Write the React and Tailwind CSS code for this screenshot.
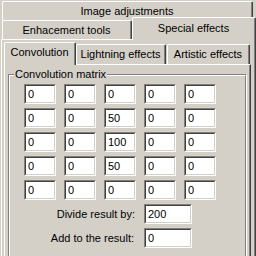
import React from 'react';

const Tab = ({ label, className = '', inner = 'items-center' }) => (
  <div
    className={`flex bg-[#d4d0c8] rounded-t-[2px] border-t border-l border-r border-white border-r-[#404040] ${className}`}
  >
    <div className={`flex-1 flex justify-center whitespace-nowrap border-r border-[#808080] ${inner}`}>
      {label}
    </div>
  </div>
);

const Field = ({ value, w = 'w-[32px]' }) => (
  <div className={`${w} h-[20px] border border-t-[#808080] border-l-[#808080] border-r-white border-b-white`}>
    <div className="h-full flex items-center pl-[2px] bg-white border border-t-[#404040] border-l-[#404040] border-r-[#d4d0c8] border-b-[#d4d0c8]">
      {value}
    </div>
  </div>
);

const matrix = [
  [0, 0, 0, 0, 0],
  [0, 0, 50, 0, 0],
  [0, 0, 100, 0, 0],
  [0, 0, 50, 0, 0],
  [0, 0, 0, 0, 0],
];

const App = () => {
  return (
    <div className="w-[256px] h-[256px] overflow-hidden bg-[#d4d0c8] text-black text-[11px] leading-none font-['Liberation_Sans',Arial,sans-serif]">
      {/* back row */}
      <div className="pt-[1px] pl-[2px]">
        <Tab label="Image adjustments" className="w-[251px] h-[19px]" />
      </div>

      {/* front row */}
      <div className="flex items-start h-[19px] pl-[2px]">
        <Tab label="Enhacement tools" className="w-[130px] h-[19px]" />
        <Tab
          label="Special effects"
          className="relative z-10 -mt-[3px] w-[124px] h-[23px]"
          inner="items-center pb-[2px]"
        />
      </div>

      {/* outer panel */}
      <div className="ml-[1px] w-[255px] border-t border-l border-r border-white border-r-[#404040]">
        <div className="border-r border-[#808080] pt-[2px] pl-[2px] pb-[8px]">
          <div className="flex items-start h-[22px]">
            <Tab
              label="Convolution"
              className="relative z-10 w-[72px] h-[23px]"
              inner="items-center pb-[3px]"
            />
            <Tab label="Lightning effects" className="mt-[2px] w-[90px] h-[20px]" />
            <Tab label="Artistic effects" className="mt-[2px] ml-[1px] w-[83px] h-[20px]" />
          </div>

          {/* inner panel */}
          <div className="w-[247px] border-t border-l border-r border-white border-r-[#404040]">
            <div className="border-r border-[#808080] pt-[9px] pl-[3px] pb-[8px]">
              {/* group box */}
              <div className="relative w-[239px] border border-t-[#808080] border-l-[#808080] border-r-white border-b-white">
                <span className="absolute -top-[6px] left-[5px] px-[1px] bg-[#d4d0c8]">
                  Convolution matrix
                </span>
                <div className="border border-t-white border-l-white border-r-[#808080] border-b-[#808080] pl-[14px] pt-[8px] pb-[12px]">
                  <div className="grid grid-cols-[repeat(5,32px)] gap-x-[8px] gap-y-[4px]">
                    {matrix.flat().map((v, i) => (
                      <Field key={i} value={v} />
                    ))}
                    <div className="col-span-3 h-[20px] flex items-center justify-end pr-[1px]">
                      Divide result by:
                    </div>
                    <div className="col-span-2">
                      <Field value={200} w="w-[48px]" />
                    </div>
                    <div className="col-span-3 h-[20px] flex items-center justify-end pr-[2px]">
                      Add to the result:
                    </div>
                    <div className="col-span-2">
                      <Field value={0} w="w-[48px]" />
                    </div>
                  </div>
                </div>
              </div>
            </div>
          </div>
        </div>
      </div>
    </div>
  );
};

export default App;
